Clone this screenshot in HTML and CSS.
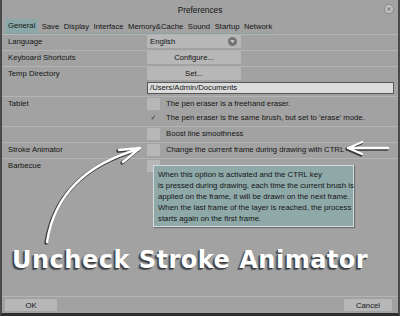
FILE: index.html
```html
<!DOCTYPE html>
<html lang="en">
<head>
    <meta charset="UTF-8">
    <title>Preferences</title>
    <link rel="stylesheet" href="styles.css">
</head>
<body>
    <div class="window">
        <div class="title-bar">
            <span class="title">Preferences</span>
            <span class="close-btn">
                <svg width="10" height="10" viewBox="0 0 10 10">
                    <circle cx="5" cy="5" r="4.5" fill="#c4c4c4" stroke="#7e7e7e" stroke-width="0.8"/>
                    <path d="M3.3 3.3 L6.7 6.7 M6.7 3.3 L3.3 6.7" stroke="#7e7e7e" stroke-width="1.2"/>
                </svg>
            </span>
        </div>

        <!-- tabs -->
        <div class="tabs">
            <span class="tab active">General</span>
            <span class="tab">Save</span>
            <span class="tab">Display</span>
            <span class="tab">Interface</span>
            <span class="tab">Memory&amp;Cache</span>
            <span class="tab">Sound</span>
            <span class="tab">Startup</span>
            <span class="tab">Network</span>
        </div>

        <div class="settings">
            <div class="row">
                <div class="label">Language</div>
                <div class="field">
                    <div class="select">English
                        <svg class="select-icon" width="9" height="9" viewBox="0 0 10 10">
                            <circle cx="5" cy="5" r="5" fill="#737373"/>
                            <path d="M2.5 3.6 L7.5 3.6 L5 6.8 Z" fill="#d8d8d8"/>
                        </svg>
                    </div>
                </div>
            </div>
            <div class="row">
                <div class="label">Keyboard Shortcuts</div>
                <div class="field"><div class="button">Configure...</div></div>
            </div>
            <div class="row">
                <div class="label">Temp Directory</div>
                <div class="field">
                    <div class="button">Set...</div>
                    <div class="text-input">/Users/Admin/Documents</div>
                </div>
            </div>
            <div class="row">
                <div class="label">Tablet</div>
                <div class="field">
                    <div class="option"><span class="checkbox"></span>The pen eraser is a freehand eraser.</div>
                    <div class="option"><span class="check">&#10003;</span>The pen eraser is the same brush, but set to 'erase' mode.</div>
                </div>
            </div>
            <div class="row">
                <div class="label"></div>
                <div class="field">
                    <div class="option"><span class="checkbox"></span>Boost line smoothness</div>
                </div>
            </div>
            <div class="row">
                <div class="label">Stroke Animator</div>
                <div class="field">
                    <div class="option"><span class="checkbox"></span>Change the current frame during drawing with CTRL</div>
                </div>
            </div>
            <div class="row">
                <div class="label">Barbecue</div>
                <div class="field">
                    <div class="option"><span class="checkbox"></span></div>
                </div>
            </div>
        </div>

        <div class="footer">
            <div class="button footer-btn">OK</div>
            <div class="button footer-btn">Cancel</div>
        </div>

        <!-- annotations over the dialog -->
        <div class="tooltip">
            When this option is activated and the CTRL key<br>
            is pressed during drawing, each time the current brush is<br>
            applied on the frame, it will be drawn on the next frame.<br>
            When the last frame of the layer is reached, the process<br>
            starts again on the first frame.
        </div>

        <svg class="arrows" width="400" height="316" viewBox="0 0 400 316">
            <g fill="none" stroke-linecap="round" stroke-linejoin="round">
                <g stroke="#3a3a3a" stroke-width="3.4" transform="translate(-1,1)">
                    <path d="M47 242 Q58 172 139 149"/>
                    <path d="M119 150 L140 148 L123 162"/>
                    <path d="M388 148 L348 148 M362 142 L348 148 L362 154"/>
                </g>
                <g stroke="#ffffff" stroke-width="2.4">
                    <path d="M47 242 Q58 172 139 149"/>
                    <path d="M119 150 L140 148 L123 162"/>
                    <path d="M388 148 L348 148 M362 142 L348 148 L362 154"/>
                </g>
            </g>
        </svg>

        <div class="caption">Uncheck Stroke Animator</div>
    </div>
</body>
</html>
```

FILE: styles.css
```css
:root {
    --bg: #a2a2a2;
    --line: #b4b4b4;
    --btn: #b7b7b7;
    --teal: #8aa8a8;
    --text: #141414;
}

body {
    margin: 0;
    font-family: "Liberation Sans", Arial, sans-serif;
    font-size: 7.7px;
    color: var(--text);
}

.window {
    position: relative;
    width: 400px;
    height: 316px;
    box-sizing: border-box;
    background-color: var(--bg);
    border-left: 2px solid #4a4a4a;
    border-right: 2px solid #4a4a4a;
    border-bottom: 3px solid #2e2e2e;
    display: flex;
    flex-direction: column;
    overflow: hidden;
}

/* --- title bar --- */
.title-bar {
    height: 19px;
    flex-shrink: 0;
    display: flex;
    align-items: center;
    justify-content: center;
    position: relative;
    font-size: 8.3px;
}

.close-btn {
    position: absolute;
    right: 4px;
    top: 4px;
    line-height: 0;
}

/* --- tabs --- */
.tabs {
    display: flex;
    flex-shrink: 0;
    margin-left: 3px;
    align-self: flex-start;
    border-bottom: 1px solid #86a2a2;
    height: 15px;
    box-sizing: border-box;
    align-items: flex-end;
}

.tab {
    padding: 0 2.3px 2px 2.3px;
    font-size: 7.7px;
}

.tab.active {
    background-color: var(--teal);
    align-self: stretch;
    display: flex;
    align-items: center;
    padding: 0 3px 1px 3px;
    margin-right: 1px;
}

/* --- rows --- */
.settings {
    display: flex;
    flex-direction: column;
}

.row {
    display: flex;
    border-top: 1px solid var(--line);
}

.label {
    width: 145px;
    flex-shrink: 0;
    padding-left: 6px;
    line-height: 13px;
    box-sizing: border-box;
}

.field {
    flex: 1;
    display: flex;
    flex-direction: column;
    gap: 1px;
    padding: 0 4px 2px 0;
}

.select,
.button {
    width: 94px;
    height: 13px;
    background-color: var(--btn);
    display: flex;
    align-items: center;
    box-sizing: border-box;
}

.select {
    padding: 0 4px 0 3px;
    justify-content: space-between;
}

.button {
    justify-content: center;
}

.text-input {
    margin-top: 1px;
    height: 12px;
    background-color: #dcdcdc;
    border: 1px solid #555555;
    box-sizing: border-box;
    padding-left: 2px;
    line-height: 10px;
}

.option {
    display: flex;
    align-items: center;
    height: 13px;
    gap: 6px;
}

.checkbox {
    width: 13px;
    height: 12px;
    background-color: var(--btn);
}

.check {
    width: 13px;
    text-align: center;
    font-family: "DejaVu Sans", sans-serif;
    font-size: 7px;
    color: #333333;
}

/* --- footer --- */
.footer {
    margin-top: auto;
    border-top: 1px solid var(--line);
    display: flex;
    justify-content: space-between;
    padding: 2px 6px 2px 3px;
}

.footer-btn {
    width: 52px;
    height: 12px;
}

.footer-btn:last-child {
    width: 48px;
}

/* --- annotations --- */
.tooltip {
    position: absolute;
    left: 151px;
    top: 165px;
    width: 201px;
    height: 62px;
    padding: 3px 4px;
    background-color: #8fa9a9;
    border: 1px solid #d2dcdc;
    box-shadow: 1px 1px 1px rgba(0, 0, 0, 0.3);
    font-size: 7.8px;
    line-height: 11px;
    white-space: nowrap;
    box-sizing: border-box;
}

.arrows {
    position: absolute;
    left: -2px;
    top: 0;
    pointer-events: none;
}

.caption {
    position: absolute;
    left: 10px;
    top: 246px;
    white-space: nowrap;
    font-family: "DejaVu Sans", Verdana, sans-serif;
    font-weight: bold;
    font-size: 24px;
    letter-spacing: 0.5px;
    color: #ffffff;
    text-shadow: -1px 1px 0 #3a3a3a, -2px 2px 1px #555555;
}
```
